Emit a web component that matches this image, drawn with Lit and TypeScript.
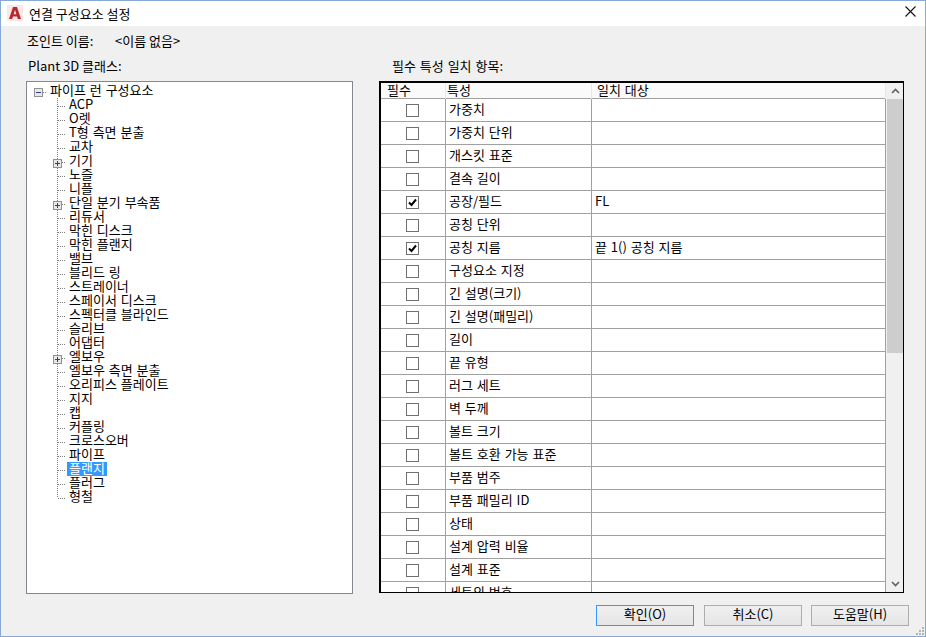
import { LitElement, html, svg, css } from "lit";
import { customElement } from "lit/decorators.js";

const TREE: [string, boolean?][] = [
  ["ACP"], ["O렛"], ["T형 측면 분출"], ["교차"], ["기기", true], ["노즐"], ["니플"],
  ["단일 분기 부속품", true], ["리듀서"], ["막힌 디스크"], ["막힌 플랜지"], ["밸브"],
  ["블리드 링"], ["스트레이너"], ["스페이서 디스크"], ["스펙터클 블라인드"], ["슬리브"],
  ["어댑터"], ["엘보우", true], ["엘보우 측면 분출"], ["오리피스 플레이트"], ["지지"],
  ["캡"], ["커플링"], ["크로스오버"], ["파이프"], ["플랜지"], ["플러그"], ["형철"],
];

const ROWS: [string, string, boolean][] = [
  ["가중치", "", false], ["가중치 단위", "", false], ["개스킷 표준", "", false],
  ["결속 길이", "", false], ["공장/필드", "FL", true], ["공칭 단위", "", false],
  ["공칭 지름", "끝 1() 공칭 지름", true], ["구성요소 지정", "", false],
  ["긴 설명(크기)", "", false], ["긴 설명(패밀리)", "", false], ["길이", "", false],
  ["끝 유형", "", false], ["러그 세트", "", false], ["벽 두께", "", false],
  ["볼트 크기", "", false], ["볼트 호환 가능 표준", "", false], ["부품 범주", "", false],
  ["부품 패밀리 ID", "", false], ["상태", "", false], ["설계 압력 비율", "", false],
  ["설계 표준", "", false], ["세트의 번호", "", false],
];

@customElement("app-root")
export class AppRoot extends LitElement {
  static styles = css`
    :host {
      display: block;
      width: 926px;
      height: 637px;
      font: 13px/14px "Noto Sans CJK KR", "Liberation Sans", sans-serif;
      color: #000;
    }
    * { box-sizing: border-box; }
    .win {
      width: 926px;
      height: 637px;
      border: 1px solid #86a9d6;
      background: #f0f0f0;
      display: flex;
      flex-direction: column;
      overflow: hidden;
    }
    .title {
      height: 25px;
      flex: none;
      background: #fff;
      display: flex;
      align-items: center;
      padding-left: 6px;
      gap: 6px;
    }
    .title .logo { display: block; margin-top: -1px; }
    .title .close { margin: 0 9px 4px auto; width: 11px; height: 11px; display: block; }
    .body {
      flex: 1;
      position: relative;
      display: flex;
      flex-direction: column;
      padding: 7px 16px 0 25px;
    }
    .joint { display: flex; height: 16px; line-height: 16px; padding-left: 1px; }
    .joint span:first-child { width: 88px; }
    .cols { display: flex; margin-top: 9px; }
    .left { width: 327px; margin-right: 26px; flex: none; }
    .right { width: 525px; flex: none; word-spacing: 1px; }
    .cap { height: 16px; line-height: 16px; margin-bottom: 7px; padding-left: 2px; }
    .right .cap { padding-left: 13px; }
    .tree {
      height: 513px;
      border: 1px solid #828790;
      background: #fff;
      padding: 2px 0 0 7px;
      word-spacing: 1px;
    }
    .node { display: flex; height: 14px; align-items: center; white-space: nowrap; }
    .exp { width: 9px; height: 9px; flex: none; display: block; margin-top: 3px; }
    .dots {
      flex: none;
      height: 1px;
      margin-top: 3px;
      background: repeating-linear-gradient(90deg, #808080 0 1px, transparent 1px 2px);
    }
    .root .dots { width: 4px; }
    .lbl { margin-left: 1px; padding: 0 2px; height: 14px; line-height: 12px; }
    .child { padding-left: 23px; position: relative; }
    .child .v {
      width: 1px; height: 14px; flex: none;
      background: repeating-linear-gradient(180deg, #808080 0 1px, transparent 1px 2px);
    }
    .child.last .v { height: 8px; align-self: flex-start; }
    .child .dots { width: 8px; }
    .sel { background: #3399ff; color: #fff; }
    .child .exp { position: absolute; left: 19px; top: 5px; margin: 0; }
    .table {
      position: relative;
      height: 512px;
      border: 1px solid #000;
      border-left-width: 2px;
      border-top-width: 2px;
      background: #fff;
      display: flex;
      overflow: hidden;
    }
    .grid { width: 505px; flex: none; overflow: hidden; }
    .r {
      display: grid;
      grid-template-columns: 65px 146px 294px;
      height: 23px;
      border-bottom: 1px solid #a0a0a0;
    }
    .r > div {
      display: flex; align-items: center;
      border-right: 1px solid #a0a0a0;
      padding: 0 0 2px 3px;
      white-space: nowrap;
    }
    .r > .c { justify-content: center; padding: 0 1px 0 0; }
    .head {
      height: 16px;
      background: #fafafa;
      border-bottom: 1px solid #a0a0a0;
    }
    .r.head > div { border-right-color: #e3e8f0; padding-left: 1px; }
    .r.head > div:first-child { padding-left: 6px; }
    .r.head > div:nth-child(3) { padding-left: 5px; }
    .cb {
      width: 13px; height: 13px;
      border: 1px solid #707070;
      background: #fff;
      display: block;
    }
    .sb {
      width: 17px; flex: none;
      display: flex; flex-direction: column;
      background: #f0f0f0;
      border-left: 1px solid #f0f0f0;
    }
    .sb .arr { height: 16px; flex: none; display: flex; align-items: center; justify-content: center; }
    .sb .thumb { height: 254px; background: #cdcdcd; flex: none; }
    .sb .track { flex: 1; }
    .btns { display: flex; justify-content: flex-end; gap: 10px; margin-top: 11px; }
    .btns button:last-child { margin-left: -1px; }
    button {
      width: 98px; height: 21px;
      border: 1px solid #adadad;
      background: linear-gradient(#f0f0f0, #e5e5e5);
      font: inherit; padding: 0 0 3px; color: #000;
    }
    button.def { border: 1px solid #3399ff; }
    .grip { position: absolute; right: 1px; bottom: 1px; width: 8px; height: 8px; display: block; }
  `;

  private plus(open: boolean) {
    return html`<svg class="exp" viewBox="0 0 9 9">
      <rect x=".5" y=".5" width="8" height="8" fill="#e8e8e8" stroke="#909090"></rect>
      <path d="M2 4.500h5" stroke="#24408e"></path>
      ${open ? "" : svg`<path d="M4.500 2v5" stroke="#24408e"></path>`}
    </svg>`;
  }

  render() {
    return html`<div class="win">
      <div class="title">
        <svg class="logo" width="16" height="16" viewBox="0 0 16 16">
          <rect width="16" height="16" fill="#fae8e4"></rect>
          <path d="M2 14 6 2h4l4 12h-3.200l-.7-2.500H5.900L5.200 14zM6.600 9.200h2.800L8 4.800z" fill="#b8262e" fill-rule="evenodd"></path>
        </svg>
        <span>연결 구성요소 설정</span>
        <svg class="close" viewBox="0 0 11 11"><path d="M.5.500l10 10M10.500.500l-10 10" stroke="#111" stroke-width="1.100" fill="none"></path></svg>
      </div>
      <div class="body">
        <div class="joint"><span>조인트 이름:</span><span>&lt;이름 없음&gt;</span></div>
        <div class="cols">
          <div class="left">
            <div class="cap">Plant 3D 클래스:</div>
            <div class="tree">
              <div class="node root">
                ${this.plus(true)}<span class="dots"></span><span class="lbl">파이프 런 구성요소</span>
              </div>
              ${TREE.map(([t, e], i) => html`<div class="node child ${i === TREE.length - 1 ? "last" : ""}">
                <span class="v"></span><span class="dots"></span>
                ${e ? this.plus(false) : ""}
                <span class="lbl ${t === "플랜지" ? "sel" : ""}">${t}</span>
              </div>`)}
            </div>
          </div>
          <div class="right">
            <div class="cap">필수 특성 일치 항목:</div>
            <div class="table">
              <div class="grid">
                <div class="r head"><div>필수</div><div>특성</div><div>일치 대상</div></div>
                ${ROWS.map(([a, b, c]) => html`<div class="r">
                  <div class="c">
                    <svg class="cb" viewBox="0 0 11 11">${c
                      ? svg`<path d="M2 5.500l2.500 2.500L9 2.500" fill="none" stroke="#000" stroke-width="2"></path>`
                      : ""}</svg>
                  </div>
                  <div>${a}</div>
                  <div>${b}</div>
                </div>`)}
              </div>
              <div class="sb">
                <div class="arr"><svg width="9" height="6" viewBox="0 0 9 6"><path d="M1 5l3.500-3.500L8 5" fill="none" stroke="#606060" stroke-width="1.600"></path></svg></div>
                <div class="thumb"></div>
                <div class="track"></div>
                <div class="arr"><svg width="9" height="6" viewBox="0 0 9 6"><path d="M1 1l3.500 3.500L8 1" fill="none" stroke="#606060" stroke-width="1.600"></path></svg></div>
              </div>
            </div>
          </div>
        </div>
        <div class="btns">
          <button class="def">확인(O)</button>
          <button>취소(C)</button>
          <button>도움말(H)</button>
        </div>
        <svg class="grip" viewBox="0 0 8 8" fill="#b4b4b4">
          <rect x="6" y="0" width="2" height="2"></rect>
          <rect x="3" y="3" width="2" height="2"></rect><rect x="6" y="3" width="2" height="2"></rect>
          <rect x="0" y="6" width="2" height="2"></rect><rect x="3" y="6" width="2" height="2"></rect><rect x="6" y="6" width="2" height="2"></rect>
        </svg>
      </div>
    </div>`;
  }
}
